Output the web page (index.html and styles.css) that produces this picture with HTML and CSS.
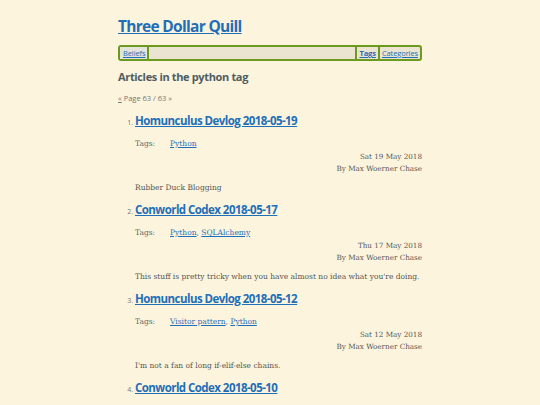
FILE: index.html
```html
<!DOCTYPE html>
<html>
<head>
<meta charset="utf-8">
<link rel="stylesheet" href="styles.css">
</head>
<body>
<div class="page">
  <h1 class="site-title"><a href="#">Three Dollar Quill</a></h1>
  <nav class="nav">
    <a class="nav-item" href="#">Beliefs</a>
    <span class="nav-spacer"></span>
    <a class="nav-item current" href="#">Tags</a>
    <a class="nav-item" href="#">Categories</a>
  </nav>
  <h2 class="page-title">Articles in the python tag</h2>
  <p class="pager"><a href="#">«</a> Page 63 / 63 »</p>
  <ol class="articles">
    <li class="article">
      <h3 class="article-title"><a href="#">Homunculus Devlog 2018-05-19</a></h3>
      <div class="tags"><span class="tags-label">Tags:</span><span><a href="#">Python</a></span></div>
      <div class="meta"><div>Sat 19 May 2018</div><div>By Max Woerner Chase</div></div>
      <p class="summary">Rubber Duck Blogging</p>
    </li>
    <li class="article">
      <h3 class="article-title"><a href="#">Conworld Codex 2018-05-17</a></h3>
      <div class="tags"><span class="tags-label">Tags:</span><span><a href="#">Python</a>, <a href="#">SQLAlchemy</a></span></div>
      <div class="meta"><div>Thu 17 May 2018</div><div>By Max Woerner Chase</div></div>
      <p class="summary">This stuff is pretty tricky when you have almost no idea what you're doing.</p>
    </li>
    <li class="article">
      <h3 class="article-title"><a href="#">Homunculus Devlog 2018-05-12</a></h3>
      <div class="tags"><span class="tags-label">Tags:</span><span><a href="#">Visitor pattern</a>, <a href="#">Python</a></span></div>
      <div class="meta"><div>Sat 12 May 2018</div><div>By Max Woerner Chase</div></div>
      <p class="summary">I'm not a fan of long if-elif-else chains.</p>
    </li>
    <li class="article last">
      <h3 class="article-title"><a href="#">Conworld Codex 2018-05-10</a></h3>
    </li>
  </ol>
</div>
</body>
</html>
```
FILE: styles.css
```css
html, body {
  margin: 0;
  padding: 0;
  background: #fcf4dc;
}
body {
  font-family: "DejaVu Serif", serif;
  font-size: 7.5px;
  color: #555555;
  overflow: hidden;
}
a { color: #1f6fb8; }
.page {
  width: 304px;
  margin: 0 auto;
  padding-top: 15px;
}
.site-title {
  margin: 0;
  font-family: "Open Sans", sans-serif;
  font-weight: 700;
  font-size: 15.5px;
  letter-spacing: -0.7px;
  line-height: 22px;
}
.site-title a { color: #1f6fb8; }
.nav {
  margin-top: 8px;
  display: flex;
  align-items: stretch;
  border: 2px solid #6b9a1f;
  border-radius: 3px;
  background: #ebe4d0;
  height: 12px;
  font-family: "Open Sans", sans-serif;
  font-size: 7.5px;
  line-height: 12px;
}
.nav-item {
  padding: 0 2px;
  letter-spacing: -0.1px;
}
.nav-item:first-child {
  padding-left: 3px;
  border-right: 2px solid #6b9a1f;
  background: #e3e4da;
}
.nav-spacer { flex: 1; }
.nav-item.current {
  font-weight: 700;
  border-left: 2px solid #6b9a1f;
  border-right: 2px solid #6b9a1f;
}
.page-title {
  margin: 8px 0 0;
  font-family: "Open Sans", sans-serif;
  font-weight: 700;
  font-size: 11px;
  letter-spacing: -0.35px;
  color: #4f5d63;
  line-height: 16px;
}
.pager {
  margin: 8px 0 0;
  font-family: "Open Sans", sans-serif;
  font-size: 7.5px;
  color: #777;
  line-height: 10px;
}
.pager a { color: #777; }
.articles {
  margin: 9px 0 0;
  padding-left: 17px;
}
.article {
  font-size: 7px;
  color: #777;
  font-family: "Open Sans", sans-serif;
  height: 89px;
}
.article.last { height: auto; }
.article-title {
  margin: 0;
  font-family: "Open Sans", sans-serif;
  font-weight: 700;
  font-size: 11.5px;
  letter-spacing: -0.55px;
  line-height: 18px;
  color: #1f6fb8;
}
.tags {
  margin-top: 9px;
  display: flex;
  font-family: "DejaVu Serif", serif;
  font-size: 7.5px;
  line-height: 10px;
  color: #666;
}
.tags-label { width: 35px; }
.meta {
  margin-top: 2px;
  text-align: right;
  font-family: "DejaVu Serif", serif;
  font-size: 7.2px;
  line-height: 12px;
  color: #555;
}
.summary {
  margin: 8px 0 0;
  font-family: "DejaVu Serif", serif;
  font-size: 7.5px;
  line-height: 10px;
  color: #555;
}
```
